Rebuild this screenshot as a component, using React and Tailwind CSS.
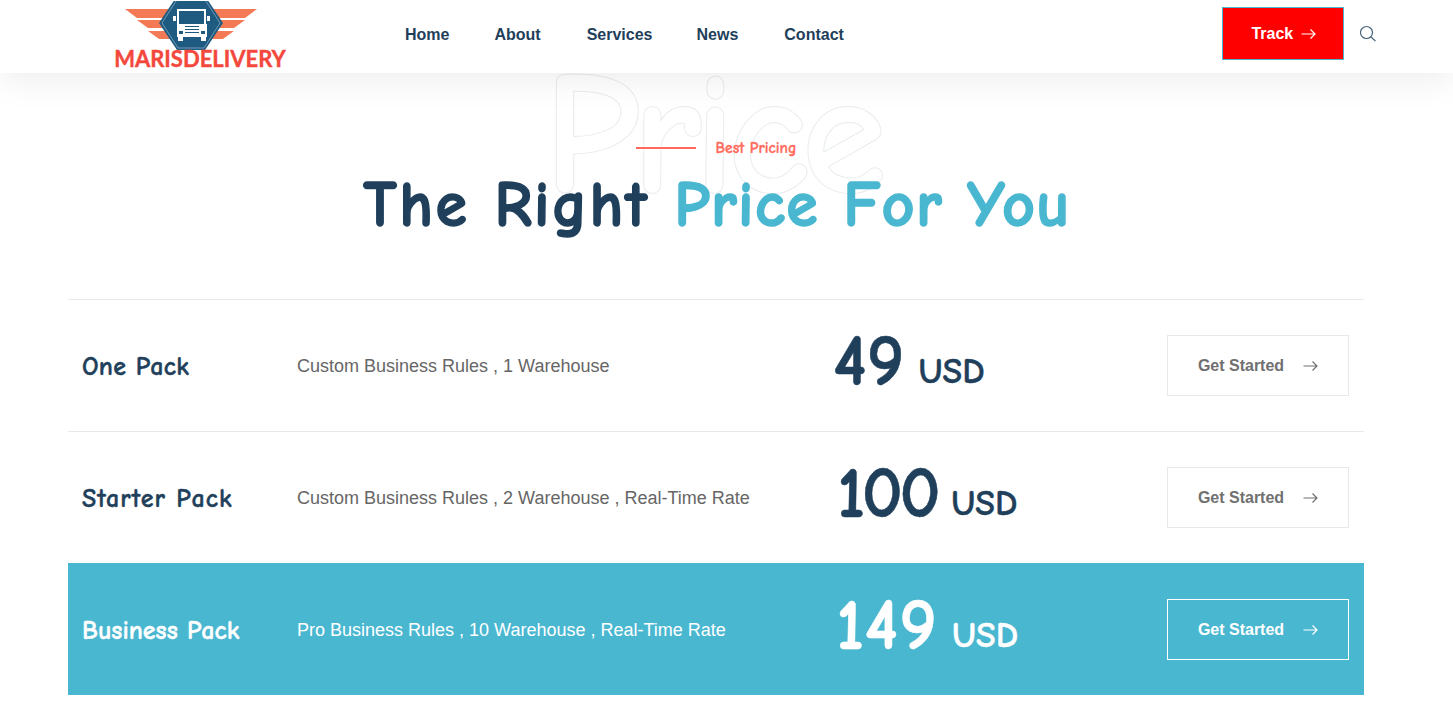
import React from 'react';

const comic = "font-['Comic_Sans_MS','Comic_Neue',cursive]";

const packs = [
  { name: 'One Pack', nameFit: 'tracking-[0.25px]', desc: 'Custom Business Rules , 1 Warehouse', price: '49', priceFit: '-ml-[5px]' },
  { name: 'Starter Pack', nameFit: 'tracking-[1px]', desc: 'Custom Business Rules , 2 Warehouse , Real-Time Rate', price: '100', priceFit: '-ml-[1px] [&>span:first-child]:tracking-[-3.5px]' },
  { name: 'Business Pack', nameFit: '', desc: 'Pro Business Rules , 10 Warehouse , Real-Time Rate', price: '149', priceFit: '-ml-[2px] [&>span:first-child]:tracking-[1px]', active: true },
];

function Arrow() {
  return (
    <svg width="15" height="12" viewBox="0 0 15 12" fill="none" stroke="currentColor" strokeWidth="1.2">
      <path d="M0.5 6h13.5M9.5 1.5 14 6l-4.5 4.5" />
    </svg>
  );
}

function Logo() {
  return (
    <div className="flex w-[172px] -translate-y-[2px] flex-col items-center">
      <svg width="132" height="49" viewBox="0 0 132 49" className="mr-[18px]">
        <path d="M0 8h132l-12 9H12zM12 19h108l-11 8H23zM23 30h86l-11 8H34z" fill="#f47a55" />
        <path d="M52-5h28l18 27-18 27H52L34 22z" fill="#1f5a80" />
        <path d="M53-3h26l16 25-16 25H53L37 22z" fill="none" stroke="#8fb6cc" strokeWidth="0.7" />
        <rect x="53" y="9" width="27" height="24" fill="none" stroke="#fff" strokeWidth="2" />
        <rect x="57" y="13" width="9" height="7" fill="#1f5a80" />
        <rect x="68" y="13" width="9" height="7" fill="#1f5a80" />
        <rect x="52" y="23" width="30" height="13" fill="#fff" />
        <path d="M48 15h3v5h-3zM82 15h3v5h-3z" fill="#fff" />
        <path d="M60 25.5h14M60 28.5h14M60 31.5h14" stroke="#1f5a80" strokeWidth="1.2" />
        <rect x="54" y="30" width="4" height="3" fill="#1f5a80" />
        <rect x="76" y="30" width="4" height="3" fill="#1f5a80" />
        <rect x="53" y="36" width="5" height="4" fill="#fff" />
        <rect x="76" y="36" width="5" height="4" fill="#fff" />
      </svg>
      <span className="-mt-[1px] font-['Lato',sans-serif] text-[22px] leading-[19px] font-bold text-[#f4483d] [-webkit-text-stroke:0.4px_currentColor]">
        MARISDELIVERY
      </span>
    </div>
  );
}

function PackRow({ pack }) {
  const on = pack.active;
  return (
    <div className={`flex h-[132px] items-center border-t pr-[15px] pl-[14px] ${on ? 'border-[#4ab7d1] bg-[#4ab7d1] text-white' : 'border-[#e8e8e8] text-[#1f3f5b]'}`}>
      <div className={`w-[215px] translate-y-[2px] ${comic} text-[26px] font-bold [-webkit-text-stroke:0.4px_currentColor] ${pack.nameFit}`}>{pack.name}</div>
      <div className={`w-[541px] translate-y-[1px] font-['Liberation_Sans',sans-serif] text-[18px] ${on ? 'text-white' : 'text-[#666666]'}`}>{pack.desc}</div>
      <div className={`flex flex-1 -translate-y-[4px] items-baseline gap-[14px] ${comic} font-bold ${pack.priceFit}`}>
        <span className="text-[72px] leading-none [-webkit-text-stroke:0.5px_currentColor]">{pack.price}</span>
        <span className="-translate-y-[2px] text-[36px] leading-none [-webkit-text-stroke:0.4px_currentColor]">USD</span>
      </div>
      <button className={`flex h-[61px] w-[182px] items-center justify-center gap-[19px] border font-['Liberation_Sans',sans-serif] text-[16px] font-bold ${on ? 'border-white text-white' : 'border-[#e8e8e8] text-[#707070]'}`}>
        Get Started
        <Arrow />
      </button>
    </div>
  );
}

export default function App() {
  return (
    <div className="h-[708px] overflow-hidden bg-white font-['Liberation_Sans',sans-serif]">
      <header className="relative z-10 flex h-[73px] items-center bg-white pl-[114px] shadow-[0_0_40px_rgba(0,0,0,0.1)]">
        <Logo />
        <nav className="-mt-[3px] ml-[119px] flex gap-[45px] text-[16px] font-bold text-[#1f3f5b]">
          <a>Home</a>
          <a>About</a>
          <a className="ml-[1px]">Services</a>
          <a className="-ml-[1px]">News</a>
          <a className="ml-[1px]">Contact</a>
        </nav>
        <button className="ml-[378px] flex h-[53px] w-[122px] -translate-y-[3px] items-center justify-center gap-[8px] border border-[#4ab7d1] bg-[#ff0000] pl-[2px] text-[16px] font-bold text-white">
          Track
          <Arrow />
        </button>
        <svg width="18" height="18" viewBox="0 0 18 18" fill="none" stroke="#48637a" strokeWidth="1.2" className="ml-[15px] -translate-y-[3px]">
          <circle cx="7.5" cy="7.5" r="6" />
          <path d="m12 12 4.5 4" />
        </svg>
      </header>

      <section className="relative ml-[68px] w-[1296px]">
        <div className={`absolute top-[-25px] left-0 w-full pr-[10px] text-center ${comic} text-[175px] leading-none font-bold tracking-[-8.5px] text-transparent [-webkit-text-stroke:1px_#e9edf0]`}>
          Price
        </div>
        <div className="relative flex flex-col items-center pt-[65px]">
          <div className="flex items-center gap-[20px]">
            <span className="h-[2px] w-[60px] bg-[#ff6a5c]" />
            <span className={`${comic} text-[15.5px] leading-[20px] font-bold text-[#ff6a5c] [-webkit-text-stroke:0.3px_currentColor]`}>Best Pricing</span>
          </div>
          <h1 className={`mt-[7px] pl-[2px] ${comic} text-[64px] leading-[80px] font-bold tracking-[2.4px] text-[#1f3f5b] [-webkit-text-stroke:1.5px_currentColor]`}>
            The Right <span className="tracking-[1.3px] text-[#4ab7d1]">Price For You</span>
          </h1>
        </div>
        <div className="relative mt-[54px]">
          {packs.map((p) => (
            <PackRow key={p.name} pack={p} />
          ))}
        </div>
      </section>
    </div>
  );
}
